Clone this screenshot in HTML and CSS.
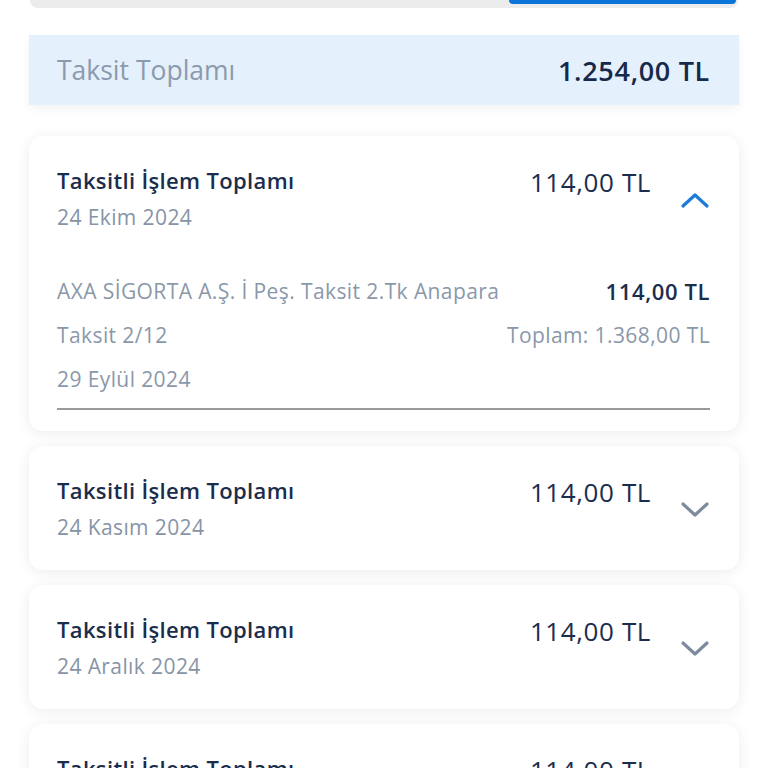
FILE: index.html
```html
<!DOCTYPE html>
<html lang="tr">
<head>
<meta charset="utf-8">
<link rel="stylesheet" href="styles.css">
</head>
<body>
<div class="page">
  <div class="segment">
    <div class="segment-active"></div>
  </div>

  <div class="summary">
    <span class="summary-label">Taksit Toplamı</span>
    <span class="summary-value">1.254,00 TL</span>
  </div>

  <div class="card">
    <div class="card-head">
      <div class="head-left">
        <div class="title">Taksitli İşlem Toplamı</div>
        <div class="date">24 Ekim 2024</div>
      </div>
      <div class="amount">114,00 TL</div>
      <svg class="chev up" width="30" height="18" viewBox="0 0 30 18"><path d="M3 15 L15 4 L27 15" fill="none" stroke="currentColor" stroke-width="3.2" stroke-linecap="round" stroke-linejoin="round"/></svg>
    </div>
    <div class="details">
      <div class="drow"><span class="dlabel">AXA SİGORTA A.Ş. İ Peş. Taksit 2.Tk Anapara</span><span class="dval">114,00 TL</span></div>
      <div class="drow"><span class="dlabel">Taksit 2/12</span><span class="dlabel">Toplam: 1.368,00 TL</span></div>
      <div class="drow"><span class="dlabel">29 Eylül 2024</span></div>
      <div class="divider"></div>
    </div>
  </div>

  <div class="card">
    <div class="card-head">
      <div class="head-left">
        <div class="title">Taksitli İşlem Toplamı</div>
        <div class="date">24 Kasım 2024</div>
      </div>
      <div class="amount">114,00 TL</div>
      <svg class="chev down" width="30" height="18" viewBox="0 0 30 18"><path d="M3 3 L15 14 L27 3" fill="none" stroke="currentColor" stroke-width="3.2" stroke-linecap="round" stroke-linejoin="round"/></svg>
    </div>
  </div>

  <div class="card">
    <div class="card-head">
      <div class="head-left">
        <div class="title">Taksitli İşlem Toplamı</div>
        <div class="date">24 Aralık 2024</div>
      </div>
      <div class="amount">114,00 TL</div>
      <svg class="chev down" width="30" height="18" viewBox="0 0 30 18"><path d="M3 3 L15 14 L27 3" fill="none" stroke="currentColor" stroke-width="3.2" stroke-linecap="round" stroke-linejoin="round"/></svg>
    </div>
  </div>

  <div class="card">
    <div class="card-head">
      <div class="head-left">
        <div class="title">Taksitli İşlem Toplamı</div>
        <div class="date">24 Ocak 2025</div>
      </div>
      <div class="amount">114,00 TL</div>
      <svg class="chev down" width="30" height="18" viewBox="0 0 30 18"><path d="M3 3 L15 14 L27 3" fill="none" stroke="currentColor" stroke-width="3.2" stroke-linecap="round" stroke-linejoin="round"/></svg>
    </div>
  </div>
</div>
</body>
</html>
```
FILE: styles.css
```css
html, body {
  margin: 0;
  padding: 0;
  background: #ffffff;
  font-family: "Open Sans", "Noto Sans", sans-serif;
  overflow: hidden;
}
.page {
  width: 768px;
  height: 768px;
  overflow: hidden;
  padding: 0 29px;
  box-sizing: border-box;
  display: flex;
  flex-direction: column;
}
.segment {
  height: 8px;
  margin: 0 1px;
  background: #ececec;
  border-radius: 0 0 12px 12px;
  display: flex;
  justify-content: flex-end;
  padding-right: 2px;
  flex-shrink: 0;
}
.segment-active {
  width: 227px;
  height: 4px;
  background: #0b74d9;
  border-radius: 0 0 10px 10px;
}
.summary {
  margin-top: 27px;
  height: 70px;
  background: #e4f0fc;
  display: flex;
  align-items: center;
  justify-content: space-between;
  padding: 0 29px 0 28px;
  box-shadow: 0 4px 10px rgba(0,0,0,0.05);
  flex-shrink: 0;
}
.summary-label {
  font-size: 26.5px;
  color: #8b9aad;
}
.summary-value {
  font-size: 27px;
  font-weight: 600;
  color: #17294a;
  letter-spacing: 0.7px;
}
.card {
  margin-top: 31px;
  background: #fff;
  border-radius: 14px;
  box-shadow: 0 2px 14px rgba(0,0,0,0.08);
  padding: 29px 29px 0 28px;
  flex-shrink: 0;
}
.card + .card {
  margin-top: 15px;
}
.card-head {
  display: flex;
  align-items: center;
  padding-bottom: 29px;
}
.head-left {
  flex: 1;
  display: flex;
  flex-direction: column;
  gap: 8px;
}
.title {
  font-size: 22px;
  line-height: 30px;
  font-weight: 600;
  color: #1b2d4c;
  letter-spacing: 0.35px;
}
.date {
  font-size: 21px;
  line-height: 28px;
  font-weight: 500;
  color: #8794a6;
  letter-spacing: 0.4px;
}
.amount {
  align-self: flex-start;
  font-size: 26px;
  line-height: 34px;
  font-weight: 500;
  color: #1b2d4c;
  letter-spacing: 0.6px;
}
.chev {
  margin-left: 29px;
  margin-top: 4px;
}
.chev.up { color: #1a7bd8; }
.chev.down { color: #7e8b9d; }
.details {
  margin-top: 9px;
  padding-bottom: 21px;
  display: flex;
  flex-direction: column;
}
.drow {
  display: flex;
  justify-content: space-between;
  align-items: center;
  height: 44px;
}
.dlabel {
  font-size: 21px;
  color: #8a98aa;
  letter-spacing: 0.4px;
}
.dval {
  font-size: 22px;
  font-weight: 600;
  color: #1b2d4c;
  letter-spacing: 0.6px;
}
.divider {
  margin-top: 7px;
  height: 2px;
  background: #9a9a9a;
}
```
